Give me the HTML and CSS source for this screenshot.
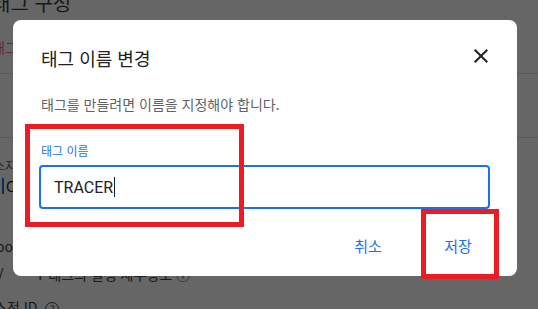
FILE: index.html
```html
<!DOCTYPE html>
<html lang="ko">
<head>
<meta charset="utf-8">
<title>태그 이름 변경</title>
<link rel="stylesheet" href="styles.css">
</head>
<body>
<div class="page">
  <h1 class="page-title">태그 구성</h1>
  <div class="tab">태그</div>
  <div class="rule rule-a"></div>
  <div class="rule rule-b"></div>
  <div class="small-label">소지</div>
  <div class="value"><span class="bar"></span>C</div>
  <div class="value2">oo</div>
  <div class="row"><span class="slash">/</span><span class="row-text">T 태그의 실행 세부정보 ⓘ</span></div>
  <div class="id-row">소전 ID <span class="help">?</span></div>
</div>
<div class="overlay">
  <div class="dialog">
    <div class="dialog-head">
      <h2 class="dialog-title">태그 이름 변경</h2>
      <button class="close" aria-label="닫기">
        <svg width="24" height="24" viewBox="0 0 24 24"><path d="M19 6.41 17.59 5 12 10.59 6.41 5 5 6.41 10.59 12 5 17.59 6.41 19 12 13.41 17.59 19 19 17.59 13.41 12z" fill="#202124"/></svg>
      </button>
    </div>
    <p class="dialog-desc">태그를 만들려면 이름을 지정해야 합니다.</p>
    <div class="field">
      <label class="field-label">태그 이름</label>
      <div class="field-input"><span class="field-value">TRACER</span><span class="caret"></span></div>
    </div>
    <div class="actions">
      <button class="btn">취소</button>
      <button class="btn">저장</button>
    </div>
  </div>
</div>
<div class="mark mark-field"></div>
<div class="mark mark-save"></div>
</body>
</html>
```
FILE: styles.css
```css
* { box-sizing: border-box; }
html, body { margin: 0; padding: 0; }
body {
  width: 538px;
  height: 309px;
  overflow: hidden;
  background: #ffffff;
  font-family: "Noto Sans CJK KR", "Roboto", sans-serif;
  color: #202124;
}
.page {
  padding: 0;
  margin-left: -8px;
}
.page-title {
  margin: -10px 0 0 0;
  font-size: 20px;
  font-weight: 400;
  line-height: 26px;
  color: #3c4043;
}
.tab {
  margin-top: 21px;
  font-size: 14px;
  line-height: 20px;
  color: #e37383;
}
.rule { height: 1px; background: #dadce0; }
.rule-a { margin-top: 16px; }
.rule-b { margin-top: 63px; }
.small-label {
  margin-top: 20px;
  font-size: 12px;
  line-height: 16px;
  color: #5f6368;
  padding-left: 2px;
}
.value {
  margin-top: 3px;
  font-size: 14px;
  line-height: 18px;
  color: #202124;
  padding-left: 10px;
  display: flex;
  align-items: center;
}
.bar { width: 2px; height: 16px; background: #1a73e8; margin-right: 2px; }
.value2 {
  margin-top: 41px;
  font-size: 14px;
  line-height: 20px;
  color: #3c4043;
  padding-left: 4px;
}
.row {
  margin-top: 8px;
  display: flex;
  align-items: center;
  font-size: 14px;
  line-height: 20px;
}
.slash { width: 44px; padding-left: 6px; color: #202124; }
.row-text { color: #3c4043; }
.id-row {
  margin-top: 13px;
  font-size: 14px;
  line-height: 20px;
  color: #3c4043;
  padding-left: 2px;
}
.help {
  display: inline-block;
  width: 14px; height: 14px;
  border: 1.5px solid #3c4043;
  border-radius: 50%;
  font-size: 10px;
  line-height: 11px;
  text-align: center;
  margin-left: 4px;
}

.overlay {
  position: fixed;
  inset: 0;
  background: rgba(0, 0, 0, 0.6);
  padding: 20px 0 0 13px;
}
.dialog {
  width: 504px;
  height: 256px;
  background: #ffffff;
  border-radius: 8px;
  padding: 0 27px;
  display: flex;
  flex-direction: column;
}
.dialog-head {
  display: flex;
  justify-content: space-between;
  align-items: flex-start;
  padding-top: 24px;
}
.dialog-title {
  margin: 0;
  padding-left: 1px;
  font-size: 18px;
  font-weight: 400;
  line-height: 28px;
  color: #202124;
}
.close {
  width: 24px;
  height: 24px;
  margin: 0 -3px 0 0;
  padding: 0;
  border: 0;
  background: none;
  display: flex;
}
.dialog-desc {
  margin: 22px 0 0 0;
  padding-left: 1px;
  font-size: 14px;
  font-weight: 400;
  line-height: 20px;
  color: #5f6368;
}
.field { margin-top: 29px; margin-left: -1px; }
.field-label {
  display: block;
  padding-left: 2px;
  font-size: 12px;
  font-weight: 400;
  line-height: 16px;
  color: #1a73e8;
}
.field-input {
  margin-top: 6px;
  height: 44px;
  border: 2px solid #1a73e8;
  border-radius: 4px;
  padding-left: 13px;
  display: flex;
  align-items: center;
}
.field-value {
  font-family: "Roboto", sans-serif;
  font-size: 16px;
  color: #202124;
}
.caret { width: 1px; height: 20px; background: #202124; margin-left: 1px; }
.actions {
  margin-top: 18px;
  display: flex;
  justify-content: flex-end;
  gap: 26px;
  margin-right: 0;
}
.btn {
  min-width: 64px;
  height: 36px;
  padding: 0 8px;
  border: 0;
  background: none;
  font-family: "Noto Sans CJK KR", sans-serif;
  font-size: 15px;
  font-weight: 400;
  color: #1a73e8;
}

.mark {
  position: fixed;
  border: 5px solid #ed1c24;
}
.mark-field { left: 25px; top: 124px; width: 219px; height: 103px; }
.mark-save { left: 421px; top: 209px; width: 78px; height: 70px; }
```
